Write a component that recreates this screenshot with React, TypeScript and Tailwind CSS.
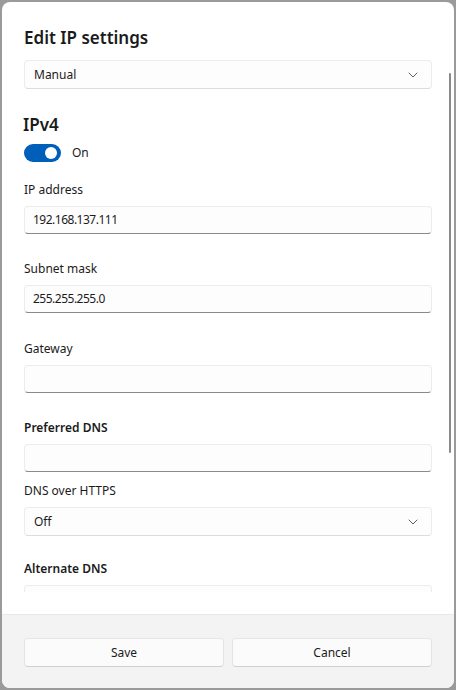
import type { ReactNode } from "react";

const font = { fontFamily: '"Noto Sans", "Segoe UI", sans-serif' };

function Chevron() {
  return (
    <svg width="10" height="6" viewBox="0 0 10 6" fill="none" className="text-[#5f5f5f]">
      <path d="M1 1l4 4 4-4" stroke="currentColor" strokeWidth="1" strokeLinecap="round" strokeLinejoin="round" />
    </svg>
  );
}

function Select({ value, className = "" }: { value: string; className?: string }) {
  return (
    <div className={`flex h-[29px] items-center justify-between rounded-[4px] border border-[#ececec] border-b-[#dcdcdc] bg-[#fdfdfd] pl-[9px] pr-[13px] text-[12px] text-[#1b1b1b] ${className}`}>
      <span>{value}</span>
      <Chevron />
    </div>
  );
}

function TextBox({ value = "" }: { value?: string }) {
  return (
    <div className="flex h-[28px] items-center rounded-[4px] border border-[#ececec] border-b-[#8a8a8a] bg-[#fdfdfd] px-[8px] text-[12px] tracking-[-0.5px] text-[#1b1b1b]">
      {value}
    </div>
  );
}

function Field({ label, bold, gap = "mt-[25px]", children }: { label: string; bold?: boolean; gap?: string; children: ReactNode }) {
  return (
    <div className={gap}>
      <div className={`text-[12px] leading-[20px] text-[#1b1b1b] ${bold ? "font-semibold" : ""}`}>{label}</div>
      <div className="mt-[6px]">{children}</div>
    </div>
  );
}

export default function App() {
  return (
    <div className="h-[690px] w-[456px] bg-[#9a9a9a] p-[2px]" style={font}>
      <div className="relative flex h-full flex-col overflow-hidden rounded-[8px] bg-white">
        {/* scrollable body */}
        <div className="h-[590px] overflow-hidden px-[22px] pt-[24px]">
          <h1 className="text-[17px] font-semibold leading-[24px] text-[#1b1b1b]">Edit IP settings</h1>
          <Select value="Manual" className="mt-[10px]" />

          <h2 className="-ml-[1px] mt-[24px] text-[17px] font-semibold leading-[24px] text-[#1b1b1b]">IPv4</h2>
          <div className="mt-[7px] flex items-center gap-[11px]">
            <div className="flex h-[18px] w-[37px] items-center justify-end rounded-full bg-[#005fb8] pr-[4px]">
              <div className="h-[12px] w-[12px] rounded-full bg-white" />
            </div>
            <span className="text-[12px] text-[#1b1b1b]">On</span>
          </div>

          <Field label="IP address" gap="mt-[18px]">
            <TextBox value="192.168.137.111" />
          </Field>
          <Field label="Subnet mask">
            <TextBox value="255.255.255.0" />
          </Field>
          <Field label="Gateway" gap="mt-[26px]">
            <TextBox />
          </Field>
          <Field label="Preferred DNS" bold>
            <TextBox />
          </Field>
          <Field label="DNS over HTTPS" gap="mt-[9px]">
            <Select value="Off" />
          </Field>
          <Field label="Alternate DNS" bold gap="mt-[23px]">
            <TextBox />
          </Field>
        </div>
        <div className="flex-1 bg-white" />

        {/* footer buttons */}
        <div className="flex h-[74px] gap-[8px] border-t border-[#e8e8e8] bg-[#f3f3f3] px-[22px] pt-[23px]">
          {["Save", "Cancel"].map((t) => (
            <button
              key={t}
              type="button"
              className="flex h-[29px] flex-1 items-center justify-center rounded-[4px] border border-[#e5e5e5] border-b-[#d0d0d0] bg-[#fbfbfb] text-[12px] text-[#1b1b1b]"
            >
              {t}
            </button>
          ))}
        </div>

        {/* overlay scrollbar */}
        <div className="absolute right-[3px] top-[71px] h-[380px] w-[2px] rounded-full bg-[#8a8a8a]" />
      </div>
    </div>
  );
}
